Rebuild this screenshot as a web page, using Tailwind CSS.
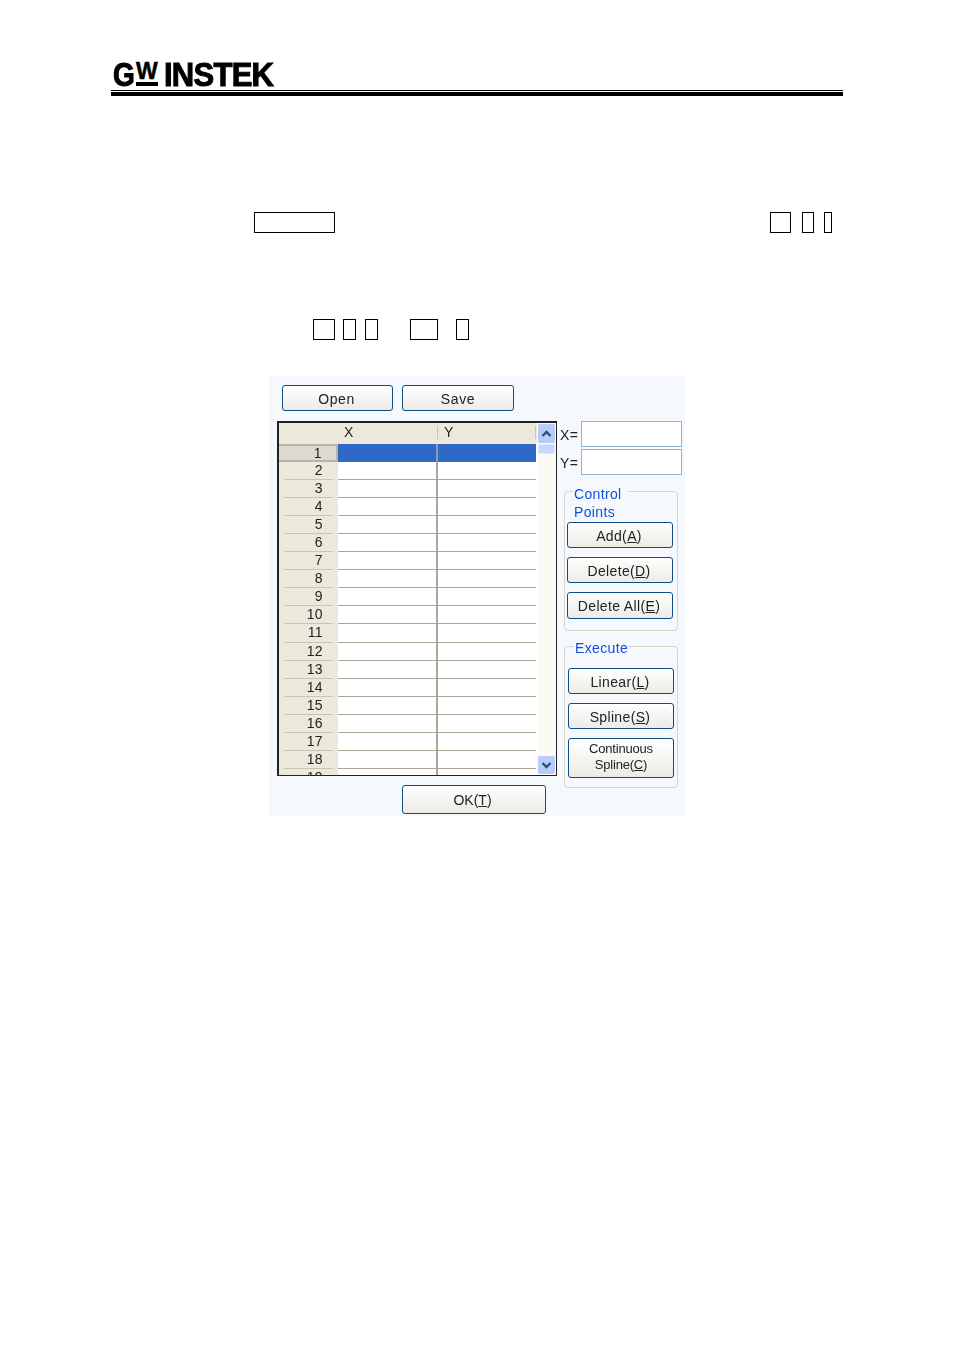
<!DOCTYPE html>
<html><head><meta charset="utf-8"><script src="https://cdn.jsdelivr.net/npm/@tailwindcss/browser@4"></script></head>
<body class="bg-white font-['Liberation_Sans',sans-serif] text-[#222]">
<div class="w-[954px] h-[1350px] overflow-hidden">
  <header class="ml-[111px] w-[732px] pt-[61px]">
    <div class="h-[28px] flex items-start pl-[2px] text-black font-bold leading-none">
      <span class="text-[33px] leading-[28px] w-[23px] [-webkit-text-stroke:1px_black] scale-x-[0.85] origin-left">G</span>
      <span class="w-[22px] flex flex-col items-start">
        <span class="text-[23px] leading-[20px] [-webkit-text-stroke:0.5px_black]">W</span>
        <span class="w-[22px] h-[4px] bg-black mt-[1px]"></span>
      </span>
      <span class="ml-[6px] text-[33px] leading-[28px] tracking-[-0.8px] [-webkit-text-stroke:1px_black] scale-x-[0.94] origin-left">INSTEK</span>
    </div>
    <div class="h-px bg-black mt-[1px]"></div>
    <div class="h-[4px] bg-black mt-[1px]"></div>
  </header>

  <div class="flex mt-[116px] h-[21px] pl-[254px]">
    <i class="block w-[81px] border border-black"></i>
    <i class="block w-[21px] border border-black ml-[435px]"></i>
    <i class="block w-[12px] border border-black ml-[11px]"></i>
    <i class="block w-[8px] border border-black ml-[10px]"></i>
  </div>
  <div class="flex mt-[86px] h-[21px] pl-[313px]">
    <i class="block w-[22px] border border-black"></i>
    <i class="block w-[13px] border border-black ml-[8px]"></i>
    <i class="block w-[13px] border border-black ml-[9px]"></i>
    <i class="block w-[28px] border border-black ml-[32px]"></i>
    <i class="block w-[13px] border border-black ml-[18px]"></i>
  </div>

  <main class="ml-[269px] mt-[36px] w-[416px] h-[440px] bg-[#f5f9fe] flex text-[14px] tracking-[0.35px] blur-[0.4px]">
    <div class="w-[291px] pt-[9px]">
      <div class="flex gap-[9px] ml-[13px]">
        <button class="w-[111px] h-[26px] pt-[2px] pr-[2px] rounded-[3px] border border-[#0f4c84] bg-linear-to-b from-white to-[#ecebe5] tracking-[0.6px]">Open</button>
        <button class="w-[112px] h-[26px] pt-[2px] rounded-[3px] border border-[#0f4c84] bg-linear-to-b from-white to-[#ecebe5] tracking-[0.6px]">Save</button>
      </div>
      <div class="ml-[8px] mt-[10px] w-[280px] h-[355px] border-2 border-[#222] border-b border-r overflow-hidden flex bg-white">
        <div class="w-[258px] shrink-0">
          <div class="h-[21px] flex bg-[#ece9dc] leading-[19px]">
            <div class="w-[59px]"></div>
            <div class="w-[100px] pl-[6px] relative">X<span class="absolute right-0 top-[3px] h-[13px] w-px bg-[#c8c5b4]"></span></div>
            <div class="w-[98px] pl-[6px] relative">Y<span class="absolute right-0 top-[3px] h-[13px] w-px bg-[#c8c5b4]"></span></div>
          </div>
          <div class="h-[18.06px] flex leading-[15px]"><div class="w-[59px] shrink-0 bg-[#dcdad2] border-y-2 border-r-2 border-[#b8b5a8] text-right pr-[14px]">1</div><div class="w-[100px] bg-[#2f69c6] border-r-2 border-[#8a9bb5]"></div><div class="w-[98px] bg-[#2f69c6]"></div></div>
          <div class="h-[18.06px] flex leading-[17px]"><div class="w-[59px] shrink-0 bg-[#ece9dc] text-right pr-[15px]"><div class="h-full border-b border-[#c8c5b4] ml-[5px] -mr-[10px] pr-[10px]">2</div></div><div class="w-[100px] border-r-2 border-b border-[#aaa696]"></div><div class="w-[98px] border-b border-[#aaa696]"></div></div>
          <div class="h-[18.06px] flex leading-[17px]"><div class="w-[59px] shrink-0 bg-[#ece9dc] text-right pr-[15px]"><div class="h-full border-b border-[#c8c5b4] ml-[5px] -mr-[10px] pr-[10px]">3</div></div><div class="w-[100px] border-r-2 border-b border-[#aaa696]"></div><div class="w-[98px] border-b border-[#aaa696]"></div></div>
          <div class="h-[18.06px] flex leading-[17px]"><div class="w-[59px] shrink-0 bg-[#ece9dc] text-right pr-[15px]"><div class="h-full border-b border-[#c8c5b4] ml-[5px] -mr-[10px] pr-[10px]">4</div></div><div class="w-[100px] border-r-2 border-b border-[#aaa696]"></div><div class="w-[98px] border-b border-[#aaa696]"></div></div>
          <div class="h-[18.06px] flex leading-[17px]"><div class="w-[59px] shrink-0 bg-[#ece9dc] text-right pr-[15px]"><div class="h-full border-b border-[#c8c5b4] ml-[5px] -mr-[10px] pr-[10px]">5</div></div><div class="w-[100px] border-r-2 border-b border-[#aaa696]"></div><div class="w-[98px] border-b border-[#aaa696]"></div></div>
          <div class="h-[18.06px] flex leading-[17px]"><div class="w-[59px] shrink-0 bg-[#ece9dc] text-right pr-[15px]"><div class="h-full border-b border-[#c8c5b4] ml-[5px] -mr-[10px] pr-[10px]">6</div></div><div class="w-[100px] border-r-2 border-b border-[#aaa696]"></div><div class="w-[98px] border-b border-[#aaa696]"></div></div>
          <div class="h-[18.06px] flex leading-[17px]"><div class="w-[59px] shrink-0 bg-[#ece9dc] text-right pr-[15px]"><div class="h-full border-b border-[#c8c5b4] ml-[5px] -mr-[10px] pr-[10px]">7</div></div><div class="w-[100px] border-r-2 border-b border-[#aaa696]"></div><div class="w-[98px] border-b border-[#aaa696]"></div></div>
          <div class="h-[18.06px] flex leading-[17px]"><div class="w-[59px] shrink-0 bg-[#ece9dc] text-right pr-[15px]"><div class="h-full border-b border-[#c8c5b4] ml-[5px] -mr-[10px] pr-[10px]">8</div></div><div class="w-[100px] border-r-2 border-b border-[#aaa696]"></div><div class="w-[98px] border-b border-[#aaa696]"></div></div>
          <div class="h-[18.06px] flex leading-[17px]"><div class="w-[59px] shrink-0 bg-[#ece9dc] text-right pr-[15px]"><div class="h-full border-b border-[#c8c5b4] ml-[5px] -mr-[10px] pr-[10px]">9</div></div><div class="w-[100px] border-r-2 border-b border-[#aaa696]"></div><div class="w-[98px] border-b border-[#aaa696]"></div></div>
          <div class="h-[18.06px] flex leading-[17px]"><div class="w-[59px] shrink-0 bg-[#ece9dc] text-right pr-[15px]"><div class="h-full border-b border-[#c8c5b4] ml-[5px] -mr-[10px] pr-[10px]">10</div></div><div class="w-[100px] border-r-2 border-b border-[#aaa696]"></div><div class="w-[98px] border-b border-[#aaa696]"></div></div>
          <div class="h-[18.06px] flex leading-[17px]"><div class="w-[59px] shrink-0 bg-[#ece9dc] text-right pr-[15px]"><div class="h-full border-b border-[#c8c5b4] ml-[5px] -mr-[10px] pr-[10px]">11</div></div><div class="w-[100px] border-r-2 border-b border-[#aaa696]"></div><div class="w-[98px] border-b border-[#aaa696]"></div></div>
          <div class="h-[18.06px] flex leading-[17px]"><div class="w-[59px] shrink-0 bg-[#ece9dc] text-right pr-[15px]"><div class="h-full border-b border-[#c8c5b4] ml-[5px] -mr-[10px] pr-[10px]">12</div></div><div class="w-[100px] border-r-2 border-b border-[#aaa696]"></div><div class="w-[98px] border-b border-[#aaa696]"></div></div>
          <div class="h-[18.06px] flex leading-[17px]"><div class="w-[59px] shrink-0 bg-[#ece9dc] text-right pr-[15px]"><div class="h-full border-b border-[#c8c5b4] ml-[5px] -mr-[10px] pr-[10px]">13</div></div><div class="w-[100px] border-r-2 border-b border-[#aaa696]"></div><div class="w-[98px] border-b border-[#aaa696]"></div></div>
          <div class="h-[18.06px] flex leading-[17px]"><div class="w-[59px] shrink-0 bg-[#ece9dc] text-right pr-[15px]"><div class="h-full border-b border-[#c8c5b4] ml-[5px] -mr-[10px] pr-[10px]">14</div></div><div class="w-[100px] border-r-2 border-b border-[#aaa696]"></div><div class="w-[98px] border-b border-[#aaa696]"></div></div>
          <div class="h-[18.06px] flex leading-[17px]"><div class="w-[59px] shrink-0 bg-[#ece9dc] text-right pr-[15px]"><div class="h-full border-b border-[#c8c5b4] ml-[5px] -mr-[10px] pr-[10px]">15</div></div><div class="w-[100px] border-r-2 border-b border-[#aaa696]"></div><div class="w-[98px] border-b border-[#aaa696]"></div></div>
          <div class="h-[18.06px] flex leading-[17px]"><div class="w-[59px] shrink-0 bg-[#ece9dc] text-right pr-[15px]"><div class="h-full border-b border-[#c8c5b4] ml-[5px] -mr-[10px] pr-[10px]">16</div></div><div class="w-[100px] border-r-2 border-b border-[#aaa696]"></div><div class="w-[98px] border-b border-[#aaa696]"></div></div>
          <div class="h-[18.06px] flex leading-[17px]"><div class="w-[59px] shrink-0 bg-[#ece9dc] text-right pr-[15px]"><div class="h-full border-b border-[#c8c5b4] ml-[5px] -mr-[10px] pr-[10px]">17</div></div><div class="w-[100px] border-r-2 border-b border-[#aaa696]"></div><div class="w-[98px] border-b border-[#aaa696]"></div></div>
          <div class="h-[18.06px] flex leading-[17px]"><div class="w-[59px] shrink-0 bg-[#ece9dc] text-right pr-[15px]"><div class="h-full border-b border-[#c8c5b4] ml-[5px] -mr-[10px] pr-[10px]">18</div></div><div class="w-[100px] border-r-2 border-b border-[#aaa696]"></div><div class="w-[98px] border-b border-[#aaa696]"></div></div>
          <div class="h-[18.06px] flex leading-[17px]"><div class="w-[59px] shrink-0 bg-[#ece9dc] text-right pr-[15px]"><div class="h-full border-b border-[#c8c5b4] ml-[5px] -mr-[10px] pr-[10px]">19</div></div><div class="w-[100px] border-r-2 border-b border-[#aaa696]"></div><div class="w-[98px] border-b border-[#aaa696]"></div></div>
        </div>
        <div class="flex-1 bg-[#fbfaf5] flex flex-col items-center pt-[1px] pb-[1px]">
          <div class="w-[17px] h-[19px] rounded-[2px] bg-[#b8ccf9] flex items-center justify-center"><svg width="11" height="8" viewBox="0 0 11 8"><path d="M1.5 6 5.500 2 9.500 6" fill="none" stroke="#2f4c7c" stroke-width="2.400"/></svg></div>
          <div class="w-[17px] h-[10px] mt-[1px] rounded-[2px] bg-[#c8d7fb] border border-[#dde6fc]"></div>
          <div class="flex-1"></div>
          <div class="w-[17px] h-[18px] rounded-[2px] bg-[#b8ccf9] flex items-center justify-center"><svg width="11" height="8" viewBox="0 0 11 8"><path d="M1.5 2 5.500 6 9.500 2" fill="none" stroke="#2f4c7c" stroke-width="2.400"/></svg></div>
        </div>
      </div>
      <button class="block ml-[133px] mt-[9px] w-[144px] h-[29px] pt-[1px] pr-[3px] rounded-[3px] border border-[#0f4c84] bg-linear-to-b from-white to-[#ecebe5] tracking-normal">OK(<span class="underline">T</span>)</button>
    </div>

    <div class="w-[125px] pt-[45px]">
      <div class="flex items-center h-[26px] gap-[2px]"><label class="w-[19px] pt-[2px]">X=</label><div class="w-[101px] h-[26px] bg-white border border-[#94b4d2]"></div></div>
      <div class="flex items-center h-[26px] gap-[2px] mt-[2px]"><label class="w-[19px] pt-[2px]">Y=</label><div class="w-[101px] h-[26px] bg-white border border-[#94b4d2]"></div></div>

      <section class="relative ml-[4px] mt-[16px] w-[114px] h-[140px] border border-[#d8d5c5] rounded-[4px] pt-[30px] pl-[2px] flex flex-col gap-[9px]">
        <div class="absolute left-[8px] -top-[7px] w-[56px] bg-[#f5f9fe] text-[#0f50e0] leading-[18px] pl-[1px]">Control<br>Points</div>
        <button class="w-[106px] h-[26px] pt-[2px] pr-[2px] rounded-[3px] border border-[#0f4c84] bg-linear-to-b from-white to-[#ecebe5]">Add(<span class="underline">A</span>)</button>
        <button class="w-[106px] h-[26px] pt-[2px] pr-[2px] rounded-[3px] border border-[#0f4c84] bg-linear-to-b from-white to-[#ecebe5]">Delete(<span class="underline">D</span>)</button>
        <button class="w-[106px] h-[27px] pt-[1px] pr-[2px] rounded-[3px] border border-[#0f4c84] bg-linear-to-b from-white to-[#ecebe5]">Delete All(<span class="underline">E</span>)</button>
      </section>

      <section class="relative ml-[4px] mt-[15px] w-[114px] h-[142px] border border-[#d8d5c5] rounded-[4px] pt-[21px] pl-[3px] flex flex-col gap-[9px]">
        <div class="absolute left-[9px] -top-[8px] bg-[#f5f9fe] text-[#0f50e0] leading-[18px] px-[1px]">Execute</div>
        <button class="w-[106px] h-[26px] pt-[2px] pr-[2px] rounded-[3px] border border-[#0f4c84] bg-linear-to-b from-white to-[#ecebe5]">Linear(<span class="underline">L</span>)</button>
        <button class="w-[106px] h-[26px] pt-[2px] pr-[2px] rounded-[3px] border border-[#0f4c84] bg-linear-to-b from-white to-[#ecebe5]">Spline(<span class="underline">S</span>)</button>
        <button class="w-[106px] h-[40px] rounded-[3px] border border-[#0f4c84] bg-linear-to-b from-white to-[#ecebe5] text-[13px] leading-[16px] tracking-[-0.2px] pb-[3px]">Continuous<br>Spline(<span class="underline">C</span>)</button>
      </section>
    </div>
  </main>
</div>
</body></html>
